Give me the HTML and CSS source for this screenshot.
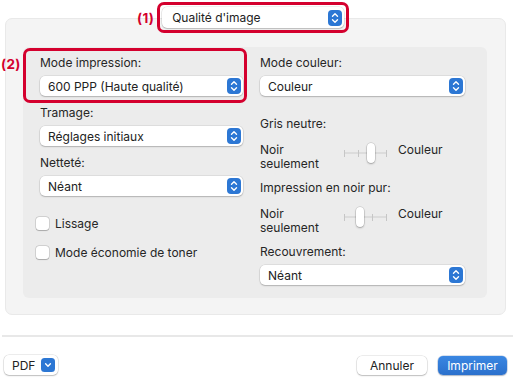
FILE: index.html
```html
<!DOCTYPE html>
<html lang="fr">
<head>
<meta charset="utf-8">
<link rel="stylesheet" href="styles.css">
</head>
<body>
<div class="header">
  <span class="mark">(1)</span>
  <div class="redbox top-box">
    <div class="popup popup-top"><span>Qualité d'image</span><svg class="step" viewBox="0 0 14 16"><rect width="14" height="16" rx="4" fill="#2c77d4"/><path d="M4.5 6.2 7 3.7 9.5 6.2M4.5 9.8 7 12.3 9.5 9.8" fill="none" stroke="#fff" stroke-width="1.4" stroke-linecap="round" stroke-linejoin="round"/></svg></div>
  </div>
</div>
<div class="outer">
  <div class="inner">
    <div class="col">
      <div class="field hl">
        <div class="label">Mode impression:</div>
        <div class="popup"><span>600 PPP (Haute qualité)</span><svg class="step" viewBox="0 0 14 16"><rect width="14" height="16" rx="4" fill="#2c77d4"/><path d="M4.5 6.2 7 3.7 9.5 6.2M4.5 9.8 7 12.3 9.5 9.8" fill="none" stroke="#fff" stroke-width="1.4" stroke-linecap="round" stroke-linejoin="round"/></svg></div>
        <span class="mark mark2">(2)</span>
      </div>
      <div class="field sp">
        <div class="label">Tramage:</div>
        <div class="popup"><span>Réglages initiaux</span><svg class="step" viewBox="0 0 14 16"><rect width="14" height="16" rx="4" fill="#2c77d4"/><path d="M4.5 6.2 7 3.7 9.5 6.2M4.5 9.8 7 12.3 9.5 9.8" fill="none" stroke="#fff" stroke-width="1.4" stroke-linecap="round" stroke-linejoin="round"/></svg></div>
      </div>
      <div class="field sp">
        <div class="label">Netteté:</div>
        <div class="popup"><span>Néant</span><svg class="step" viewBox="0 0 14 16"><rect width="14" height="16" rx="4" fill="#2c77d4"/><path d="M4.5 6.2 7 3.7 9.5 6.2M4.5 9.8 7 12.3 9.5 9.8" fill="none" stroke="#fff" stroke-width="1.4" stroke-linecap="round" stroke-linejoin="round"/></svg></div>
      </div>
      <div class="checks">
        <label class="check"><span class="box"></span>Lissage</label>
        <label class="check"><span class="box"></span>Mode économie de toner</label>
      </div>
    </div>
    <div class="col">
      <div class="field">
        <div class="label">Mode couleur:</div>
        <div class="popup"><span>Couleur</span><svg class="step" viewBox="0 0 14 16"><rect width="14" height="16" rx="4" fill="#2c77d4"/><path d="M4.5 6.2 7 3.7 9.5 6.2M4.5 9.8 7 12.3 9.5 9.8" fill="none" stroke="#fff" stroke-width="1.4" stroke-linecap="round" stroke-linejoin="round"/></svg></div>
      </div>
      <div class="label gris">Gris neutre:</div>
      <div class="srow">
        <div class="slabel">Noir<br>seulement</div>
        <div class="slider"><div class="track"><i></i><i></i><i></i><i></i></div><div class="thumb" style="left:23px"></div></div>
        <div class="slabel right">Couleur</div>
      </div>
      <div class="label pur">Impression en noir pur:</div>
      <div class="srow">
        <div class="slabel">Noir<br>seulement</div>
        <div class="slider"><div class="track"><i></i><i></i><i></i><i></i></div><div class="thumb" style="left:12px"></div></div>
        <div class="slabel right">Couleur</div>
      </div>
      <div class="field rec">
        <div class="label">Recouvrement:</div>
        <div class="popup"><span>Néant</span><svg class="step" viewBox="0 0 14 16"><rect width="14" height="16" rx="4" fill="#2c77d4"/><path d="M4.5 6.2 7 3.7 9.5 6.2M4.5 9.8 7 12.3 9.5 9.8" fill="none" stroke="#fff" stroke-width="1.4" stroke-linecap="round" stroke-linejoin="round"/></svg></div>
      </div>
    </div>
  </div>
</div>
<div class="sep"></div>
<div class="footer">
  <div class="btn pdf">PDF<svg class="chev" viewBox="0 0 14 14"><rect width="14" height="14" rx="3.5" fill="#2c77d4"/><path d="M4.6 5.8 7 8.2 9.4 5.8" fill="none" stroke="#fff" stroke-width="1.4" stroke-linecap="round" stroke-linejoin="round"/></svg></div>
  <div class="actions">
    <div class="btn cancel">Annuler</div>
    <div class="btn primary">Imprimer</div>
  </div>
</div>
</body>
</html>
```
FILE: styles.css
```css
* { box-sizing: border-box; }
html, body { margin: 0; background: #fff; }
body {
  font-family: Inter, "Noto Sans", sans-serif;
  font-size: 12px;
  color: #262626;
  width: 513px;
  height: 381px;
  overflow: hidden;
}
.header {
  position: relative;
  z-index: 2;
  display: flex;
  align-items: center;
  gap: 3px;
  padding: 2px 0 0 137px;
  height: 33px;
}
.mark {
  color: #d4002e;
  font-weight: 700;
  font-size: 13.5px;
  letter-spacing: 0.3px;
}
.redbox {
  border: 3px solid #d4002e;
  border-radius: 7px;
}
.top-box {
  width: 192px;
  height: 31px;
  padding: 2px 2px 0 2px;
}
.popup {
  display: flex;
  align-items: center;
  justify-content: space-between;
  height: 20px;
  padding: 0 2px 0 8px;
  background: #fff;
  border-radius: 5px;
  box-shadow: 0 0 0 0.5px rgba(0,0,0,0.12), 0 1px 1.5px rgba(0,0,0,0.2);
  color: #222;
}
.popup-top { height: 21px; padding-left: 10px; }
.step { width: 14px; height: 16px; display: block; flex: none; }
.outer {
  margin: -15px 7px 0 5px;
  height: 297px;
  background: #f4f4f4;
  border: 1px solid #e9e9e9;
  border-radius: 7px;
  padding: 28px 18px 16px 17px;
}
.inner {
  height: 251px;
  background: #ececec;
  border-radius: 6px;
  padding: 8px 22px 0 17px;
  display: grid;
  grid-template-columns: 203px 205px;
  column-gap: 17px;
}
.col { display: flex; flex-direction: column; }
.label { line-height: 16px; }
.field { display: flex; flex-direction: column; gap: 5px; }
.field.sp { margin-top: 9px; }
.hl { position: relative; }
.hl::after {
  content: "";
  position: absolute;
  left: -17px;
  right: -4px;
  top: -7px;
  bottom: -7px;
  border: 3px solid #d4002e;
  border-radius: 7px;
  pointer-events: none;
}
.mark2 {
  position: absolute;
  left: -39px;
  top: 1px;
  line-height: 16px;
}
.checks {
  margin-top: 20px;
  margin-left: -4px;
  display: flex;
  flex-direction: column;
  gap: 14px;
}
.check {
  display: flex;
  align-items: center;
  gap: 6px;
  line-height: 15px;
}
.box {
  width: 13px;
  height: 13px;
  background: #fff;
  border-radius: 3px;
  box-shadow: 0 0 0 0.5px rgba(0,0,0,0.2), 0 0.5px 1px rgba(0,0,0,0.2);
}
.gris { margin-top: 20px; }
.pur { margin-top: 9px; }
.srow {
  margin-top: 11px;
  display: grid;
  grid-template-columns: 84px 43px auto;
  align-items: start;
}
.slabel { line-height: 14px; }
.slabel.right { margin-left: 11px; }
.slider { position: relative; height: 20px; }
.track {
  position: absolute;
  left: 0; right: 0; top: 9px;
  height: 2px;
  background: #dcdcdc;
  border-radius: 1px;
  display: flex;
  justify-content: space-between;
}
.track i {
  display: block;
  width: 1px;
  height: 7px;
  margin-top: -2.5px;
  background: #c6c6c6;
}
.thumb {
  position: absolute;
  top: 0;
  width: 8px;
  height: 20px;
  background: #fff;
  border-radius: 4px;
  box-shadow: 0 0 0 0.5px rgba(0,0,0,0.18), 0 1px 2px rgba(0,0,0,0.25);
}
.rec { margin-top: 9px; }
.sep {
  margin-top: 20px;
  margin-left: 2px;
  height: 2px;
  background: #e8e8e8;
}
.footer {
  margin-top: 18px;
  padding: 0 6px 0 4px;
  display: flex;
  justify-content: space-between;
  align-items: center;
}
.actions { display: flex; gap: 11px; }
.btn {
  height: 19px;
  border-radius: 5px;
  background: #fff;
  box-shadow: 0 0 0 0.5px rgba(0,0,0,0.14), 0 1px 1.5px rgba(0,0,0,0.2);
  display: flex;
  align-items: center;
  justify-content: center;
  color: #222;
}
.pdf {
  width: 54px;
  height: 20px;
  justify-content: space-between;
  padding: 0 3px 0 8px;
}
.chev { width: 14px; height: 14px; display: block; }
.cancel { width: 70px; }
.primary {
  width: 69px;
  background: linear-gradient(#3a87e2, #2b70cc);
  color: #fff;
  box-shadow: 0 0 0 0.5px rgba(0,60,150,0.3), 0 1px 1.5px rgba(0,0,0,0.2);
}
```
